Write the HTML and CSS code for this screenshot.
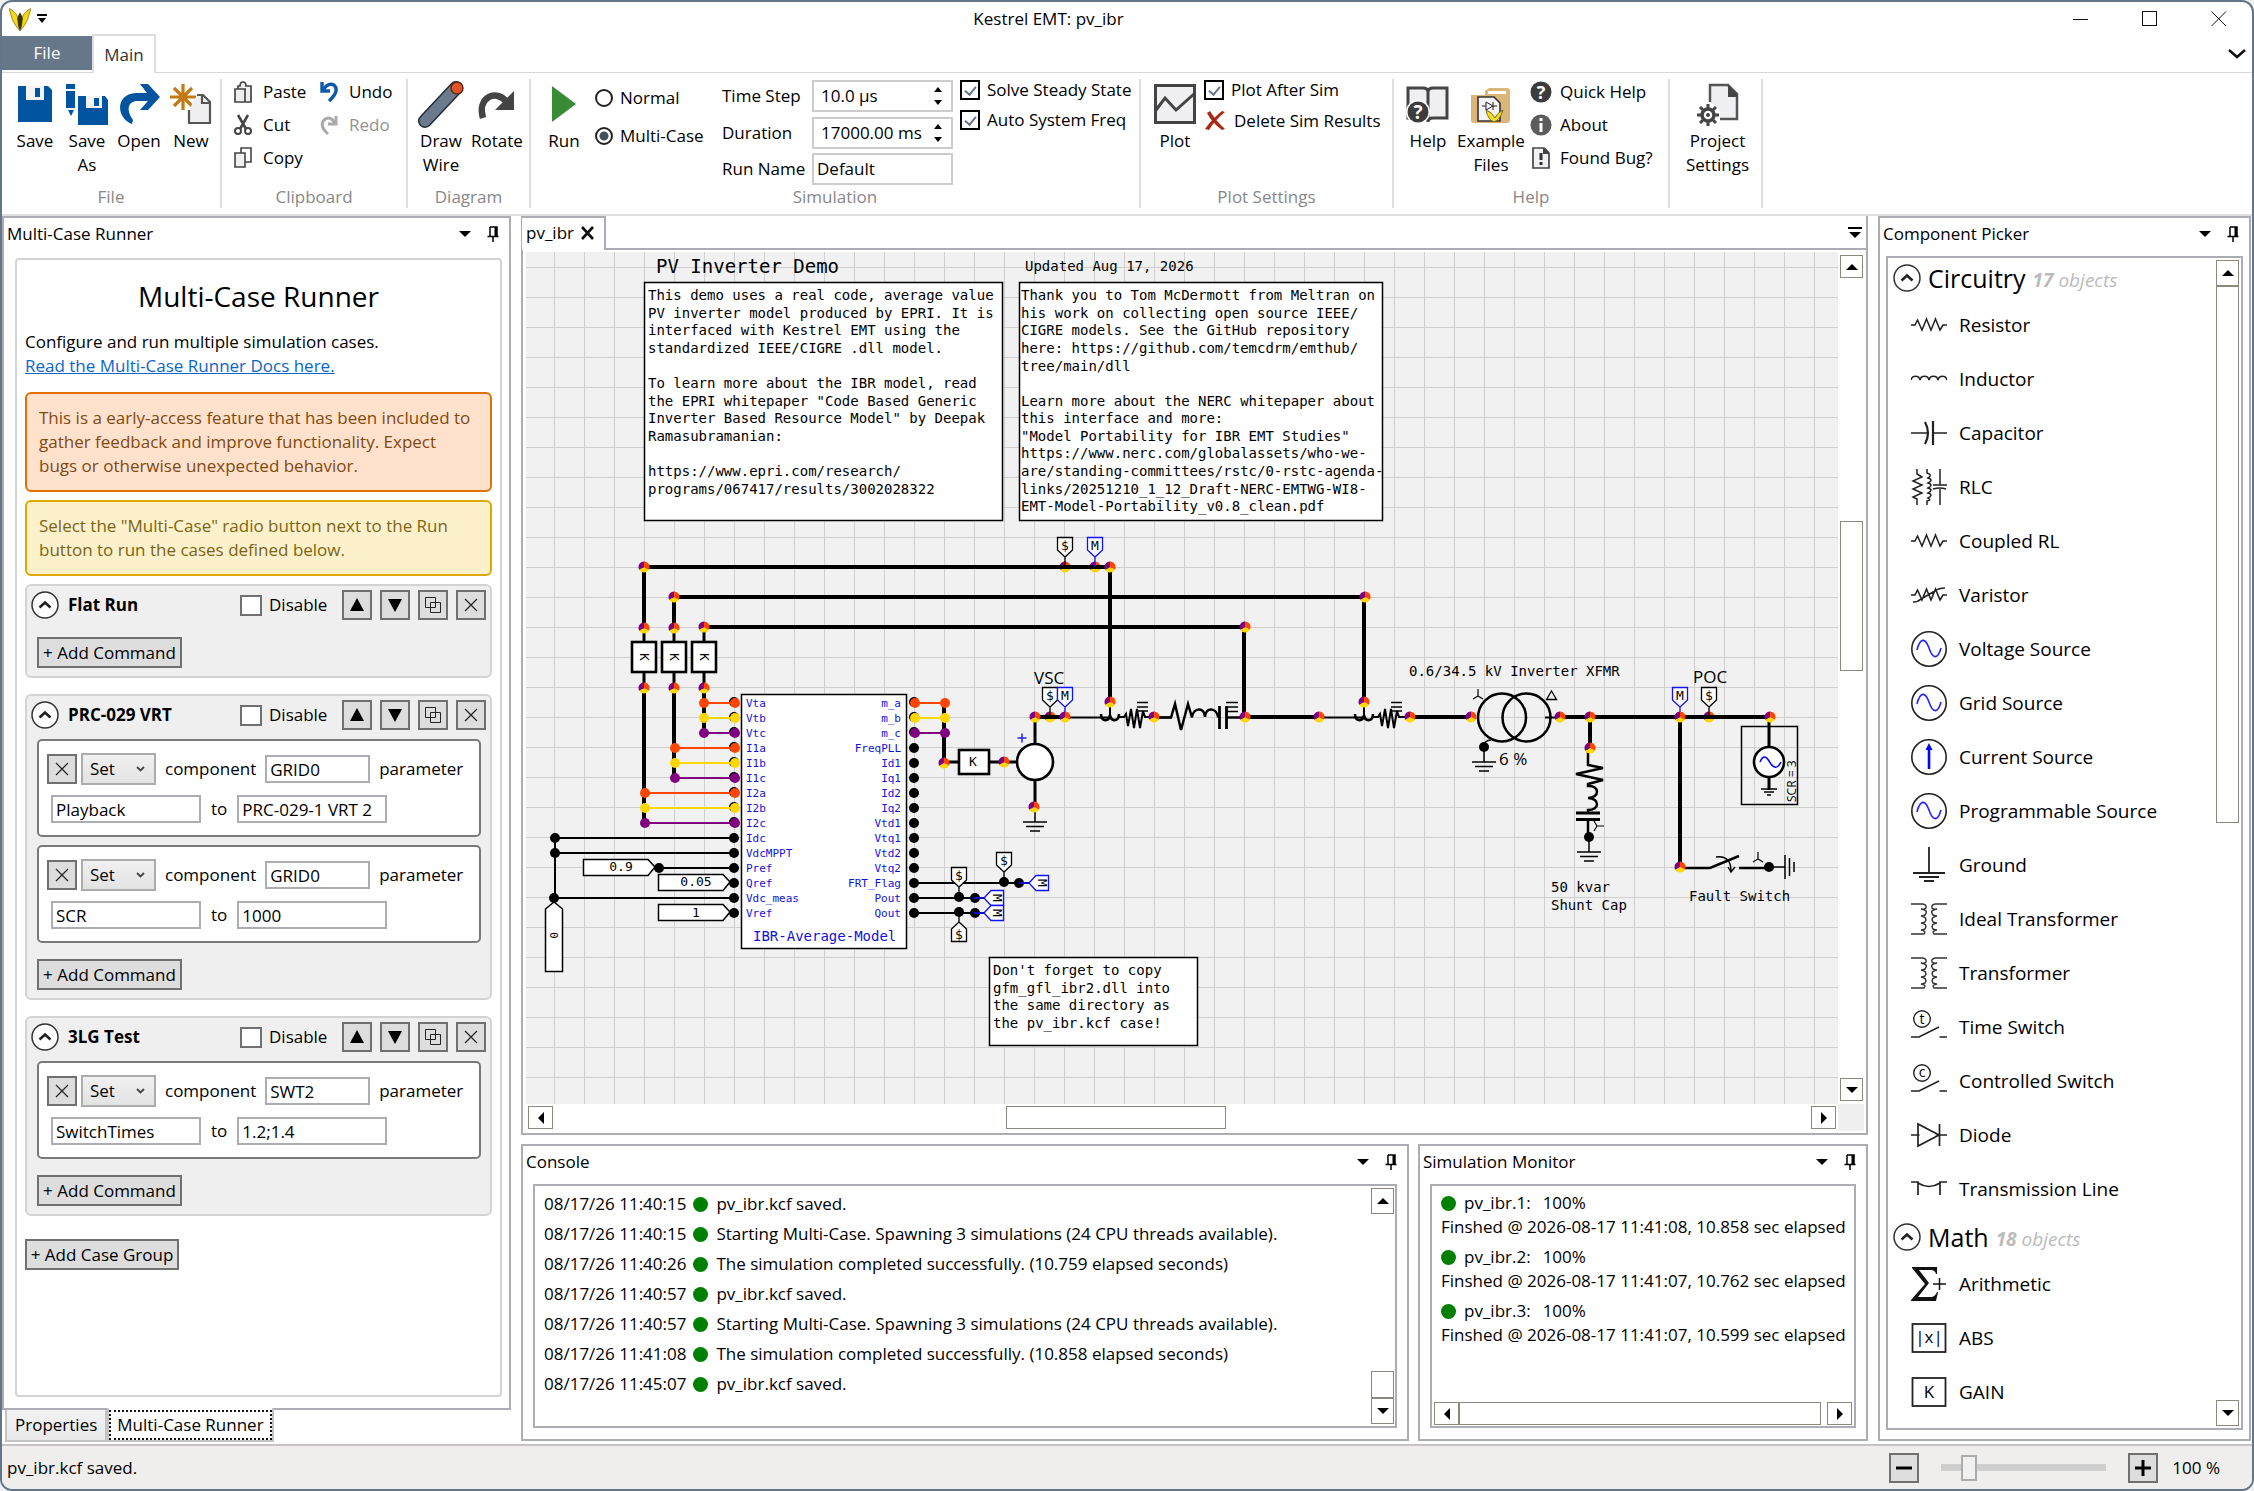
FILE: index.html
```html
<!DOCTYPE html>
<html lang="en">
<head>
<meta charset="utf-8">
<title>Kestrel EMT: pv_ibr</title>
<link rel="stylesheet" href="styles.css">
</head>
<body>
<svg class="defs" aria-hidden="true">
  <symbol id="i-up" viewBox="0 0 12 6"><path d="M0 6L6 0L12 6z"/></symbol>
  <symbol id="i-down" viewBox="0 0 12 6"><path d="M0 0L6 6L12 0z"/></symbol>
  <symbol id="i-left" viewBox="0 0 6 12"><path d="M6 0L0 6L6 12z"/></symbol>
  <symbol id="i-right" viewBox="0 0 6 12"><path d="M0 0L6 6L0 12z"/></symbol>
  <symbol id="i-pin" viewBox="0 0 12 16"><path d="M3 1h7v9M3 1v9M0.500 10.500h11M6 10.500v5.500" fill="none" stroke="#000" stroke-width="1.500"/><path d="M7.500 1h2.500v9h-2.500z"/></symbol>
  <symbol id="i-x" viewBox="0 0 14 14"><path d="M1 1L13 13M13 1L1 13" fill="none" stroke="#222" stroke-width="1.200"/></symbol>
  <symbol id="i-tri-up" viewBox="0 0 14 14"><path d="M0 13L7 0L14 13z"/></symbol>
  <symbol id="i-tri-down" viewBox="0 0 14 14"><path d="M0 1L7 14L14 1z"/></symbol>
  <symbol id="i-copy" viewBox="0 0 16 16"><path d="M.5.500h10v10h-10zM5.500 5.500h10v10h-10z" fill="none" stroke="#222"/></symbol>
  <symbol id="i-expand" viewBox="0 0 28 28"><circle cx="14" cy="14" r="13" fill="#fff" stroke="#333" stroke-width="1.500"/><path d="M8.500 16.500L14 11.500L19.500 16.500" fill="none" stroke="#222" stroke-width="2.600"/></symbol>
  <symbol id="bird" viewBox="0 0 24 26"><path d="M0 1C2 6 3 17 12 25C21 17 22 6 24 1C20 3 15 6 14 13L12 10L10 13C9 6 4 3 0 1z" fill="#f5d90a" stroke="#7a6a20" stroke-width=".8"/><path d="M12 5L14 9L15 12L14 20L12 26L10 20L9 12L10 9z" fill="#3b3413"/></symbol>
  <symbol id="c-res" viewBox="0 0 36 30"><path d="M0 15h4l2.500-5l4.500 10l4.500-11l4.500 11l4.500-11l4.500 11l3-5h4" fill="none" stroke="#222" stroke-width="1.500"/></symbol>
  <symbol id="c-ind" viewBox="0 0 36 30"><path d="M0 16c1-5 8-5 9 0c1-5 8-5 9 0c1-5 8-5 9 0c1-5 8-5 9 0" fill="none" stroke="#222" stroke-width="1.600"/></symbol>
  <symbol id="c-cap" viewBox="0 0 36 30"><path d="M0 15h17M22 15h14" fill="none" stroke="#222" stroke-width="1.500"/><path d="M14 4q6 11 0 22M22 3v24" fill="none" stroke="#222" stroke-width="2.200"/></symbol>
  <symbol id="c-rlc" viewBox="0 0 36 36"><path d="M6 0v5l5 3l-9 4l9 4l-9 4l9 4l-9 4l4 2v6M16 0v4q6 2 1 5q6 2 0 5q6 2 0 5q6 2 0 5q6 2 0 5q4 2-1 3v4M29 0v16M29 20v16M22 16h14M22 20q7-2 13 0" fill="none" stroke="#222" stroke-width="1.500"/></symbol>
  <symbol id="c-var" viewBox="0 0 36 30"><path d="M0 15h4l2.500-5l4.500 10l4.500-11l4.500 11l4.500-11l4.500 11l3-5h4M2 22q5 0 8-3l14-8q4-3 10-3" fill="none" stroke="#222" stroke-width="1.600"/></symbol>
  <symbol id="c-sine" viewBox="0 0 36 36"><circle cx="18" cy="18" r="17.200" fill="none" stroke="#222" stroke-width="1.600"/><path d="M6 19c3-12 8-13 12-2c4 12 9 11 12 0" fill="none" stroke="#22f" stroke-width="1.600"/></symbol>
  <symbol id="c-cur" viewBox="0 0 36 36"><circle cx="18" cy="18" r="17.200" fill="none" stroke="#222" stroke-width="1.600"/><path d="M18 30V9" stroke="#00f" stroke-width="2.600"/><path d="M14.500 11L18 4L21.500 11z" fill="#00f"/></symbol>
  <symbol id="c-gnd" viewBox="0 0 36 36"><path d="M18 0v26M2 26h32M8 30h20M13 34h10" fill="none" stroke="#222" stroke-width="1.800"/></symbol>
  <symbol id="c-xf" viewBox="0 0 36 36"><path d="M0 3h12q4 1 3 4q-2 2-5 1q8 1 4 6q-2 1-4 1q7 1 4 6q-2 1-4 1q7 1 4 6q-2 1-4 1q6 1 3 4l-2 0h-11M36 3h-12q-4 1-3 4q2 2 5 1q-8 1-4 6q2 1 4 1q-7 1-4 6q2 1 4 1q-7 1-4 6q2 1 4 1q-6 1-3 4h13" fill="none" stroke="#333" stroke-width="1.400"/></symbol>
  <symbol id="c-sw" viewBox="0 0 36 36"><circle cx="11" cy="10" r="8.300" fill="none" stroke="#222" stroke-width="1.400"/><path d="M0 28h8L28 18M28.500 28h7.500" fill="none" stroke="#222" stroke-width="1.500"/></symbol>
  <symbol id="c-diode" viewBox="0 0 36 36"><path d="M0 18h36M7 7v22L28 18zM28.500 7v22" fill="none" stroke="#222" stroke-width="1.700"/><path d="M8.500 10v16L26 18z" fill="#fff"/></symbol>
  <symbol id="c-line" viewBox="0 0 36 36"><path d="M0 11h7v13M36 11h-7v13M7 12q11 7 22 0" fill="none" stroke="#222" stroke-width="1.700"/></symbol>
  <symbol id="c-sum" viewBox="0 0 36 36"><path d="M1 1h25v7h-1q-1-4-5-4h-12l10 13l-11 14h13q4 0 6-5h1l-2 9h-25v-1l14-16l-13-16z" fill="#111"/><path d="M22 18h13M28.500 12v12" stroke="#111" stroke-width="1.500"/></symbol>
  <symbol id="c-box" viewBox="0 0 36 36"><rect x="1.500" y="4" width="33" height="28" fill="none" stroke="#222" stroke-width="1.800"/></symbol>
  <g id="node"><path d="M0 0V-5.500A5.500 5.500 0 0 1 4.800 2.700z" fill="#ff4500"/><path d="M0 0L4.800 2.700A5.500 5.500 0 0 1-4.800 2.700z" fill="#ffd700"/><path d="M0 0L-4.800 2.700A5.500 5.500 0 0 1 0-5.500z" fill="#800080"/></g>
  <g id="dot"><circle r="5"/></g>
  <g id="flag"><path d="M0 0V-10M0-10L-7.500-17V-29.500H7.500V-17z" fill="#fff" stroke="currentColor" stroke-width="1.300"/></g>
  <g id="gnd" fill="none" stroke="#000" stroke-width="1.500"><path d="M0-15V0M-12 0H12M-9 4.500H9M-5 9H5"/></g>
  <g id="wye" fill="none" stroke="#000" stroke-width="1.200"><path d="M0-6V1L-5 4M0 1L5 4"/></g>
  <g id="ct" fill="none" stroke="#000"><path d="M0-15V1" stroke-width="2"/><path d="M-9-3c0 8 8 8 9 1c1 7 9 7 9-1" stroke-width="2.600"/><path d="M9 0H14l2-3l2 12l3-17l3 19l3-19l3 19l3-17l2 6H44" stroke-width="2"/><path d="M27-14.500h11M27-10h11M27-6h11" stroke-width="1.300"/></g>
</svg>

<div class="window">
  <header class="titlebar">
    <div class="quick">
      <svg width="22" height="25"><use href="#bird"/></svg>
      <button class="plain" aria-label="Customize toolbar"><svg width="10" height="10"><path d="M0 0h10v2H0zM1 4h8L5 9z"/></svg></button>
    </div>
    <div class="title">Kestrel EMT: pv_ibr</div>
    <div class="winbtns">
      <button class="plain" aria-label="Minimize"><svg width="16" height="16"><path d="M0 8.500h15" stroke="#111"/></svg></button>
      <button class="plain" aria-label="Maximize"><svg width="16" height="16"><rect x=".5" y=".5" width="14" height="14" fill="none" stroke="#111"/></svg></button>
      <button class="plain" aria-label="Close"><svg width="16" height="16"><path d="M.5.500L15 15M15 .500L.5 15" stroke="#111"/></svg></button>
    </div>
  </header>
  <nav class="tabs">
    <button class="tab-file">File</button>
    <button class="tab-main">Main</button>
    <button class="plain tabs-chevron" aria-label="Collapse ribbon"><svg width="18" height="10"><path d="M1 1l8 7l8-7" fill="none" stroke="#111" stroke-width="2.500"/></svg></button>
  </nav>

  <div class="ribbon">
    <section class="group g-file">
      <div class="tools">
        <button class="big"><svg width="40" height="40"><path d="M3 2H33L37 6V38H3z" fill="#0054a0"/><path d="M11 2h18v14H11z" fill="#f3f3f6"/><path d="M20 4h5v9h-5z" fill="#0054a0"/></svg><span>Save</span></button>
        <button class="big"><svg width="44" height="42"><path d="M1 0h9v5H1zM1 7h9v17H1zM3 26h6l-3 6z" fill="#0054a0"/><path d="M13 12H40L43 16V41H13z" fill="#0054a0"/><path d="M21 12h16v12H21z" fill="#f3f3f6"/><path d="M29 14h5v8h-5z" fill="#0054a0"/></svg><span>Save As</span></button>
        <button class="big"><svg width="42" height="40"><path d="M22 0h8L42 13L30 26H22L30 17H20C11 17 7 24 15 36L14 40C-2 34-3 10 18 9H29z" fill="#0054a0"/></svg><span>Open</span></button>
        <button class="big"><svg width="42" height="42"><path d="M13 0v26M0 13h26M4 4l18 18M22 4L4 22" stroke="#c47a12" stroke-width="3.200"/><path d="M19 26v13h21V18l-7-7h-6" fill="#f0f0f3" stroke="#555" stroke-width="2.200"/><path d="M32 12v7h8" fill="none" stroke="#555" stroke-width="2.200"/></svg><span>New</span></button>
      </div>
      <div class="caption">File</div>
    </section>
    <section class="group g-clip">
      <div class="tools">
        <div class="stack">
          <button class="small"><svg width="18" height="22"><path d="M1 8h10v13H1zM4 8V5h2q0-4 3-4t3 4h5v16h-6M6 8h6" fill="#eee" stroke="#444" stroke-width="1.700"/></svg>Paste</button>
          <button class="small"><svg width="18" height="22"><path d="M4 1L12 15M14 1L6 15" stroke="#444" stroke-width="2.600"/><circle cx="4" cy="17" r="3" fill="none" stroke="#444" stroke-width="2"/><circle cx="14" cy="17" r="3" fill="none" stroke="#444" stroke-width="2"/></svg>Cut</button>
          <button class="small"><svg width="18" height="22"><path d="M7 1h10v14H7z" fill="#fff" stroke="#444" stroke-width="1.600"/><path d="M1 6h10v14H1z" fill="#f0f0f0" stroke="#444" stroke-width="1.600"/></svg>Copy</button>
        </div>
        <div class="stack">
          <button class="small"><svg width="18" height="22"><path d="M2 1v9h8" fill="none" stroke="#0f5aa8" stroke-width="3.400"/><path d="M3 9Q8 1 14 4Q20 10 9 20" fill="none" stroke="#0f5aa8" stroke-width="3.400"/></svg>Undo</button>
          <button class="small off"><svg width="18" height="22"><path d="M16 2v8h-8M15 9Q10 1 4 6Q-1 12 8 20" fill="none" stroke="#aaa" stroke-width="3"/></svg>Redo</button>
        </div>
      </div>
      <div class="caption">Clipboard</div>
    </section>
    <section class="group g-diag">
      <div class="tools">
        <button class="big up"><svg width="46" height="48"><path d="M7 37L38 4" stroke="#222c38" stroke-width="14" stroke-linecap="round"/><path d="M7 37L38 4" stroke="#6b7b8d" stroke-width="11" stroke-linecap="round"/><circle cx="39" cy="4" r="6" fill="#e0542a" stroke="#5b2a1a" stroke-width="1.500"/></svg><span>Draw Wire</span></button>
        <button class="big"><svg width="38" height="40"><path d="M5 34C-1 14 17 5 28 17" fill="none" stroke="#444" stroke-width="6.500"/><path d="M36 7V26H17z" fill="#444"/></svg><span>Rotate</span></button>
      </div>
      <div class="caption">Diagram</div>
    </section>
    <section class="group g-sim">
      <div class="tools">
        <button class="big"><svg width="26" height="40"><path d="M1 2L25 20L1 38z" fill="#388a34"/></svg><span>Run</span></button>
        <div class="radios">
          <label><input type="radio" name="mode">Normal</label>
          <label><input type="radio" name="mode" checked>Multi-Case</label>
        </div>
        <div class="fields">
          <label for="ts">Time Step</label><div class="spin"><input id="ts" type="text" value="10.0 µs"><div class="arrows"><button class="plain" aria-label="Increase"><svg width="8" height="5"><path d="M0 5L4 0L8 5z"/></svg></button><button class="plain" aria-label="Decrease"><svg width="8" height="5"><path d="M0 0L4 5L8 0z"/></svg></button></div></div>
          <label for="du">Duration</label><div class="spin"><input id="du" type="text" value="17000.00 ms"><div class="arrows"><button class="plain" aria-label="Increase"><svg width="8" height="5"><path d="M0 5L4 0L8 5z"/></svg></button><button class="plain" aria-label="Decrease"><svg width="8" height="5"><path d="M0 0L4 5L8 0z"/></svg></button></div></div>
          <label for="rn">Run Name</label><div class="spin"><input id="rn" class="rn" type="text" value="Default"></div>
        </div>
        <div class="checks">
          <label><input type="checkbox" checked>Solve Steady State</label>
          <label><input type="checkbox" checked>Auto System Freq</label>
        </div>
      </div>
      <div class="caption">Simulation</div>
    </section>
    <section class="group g-plot">
      <div class="tools">
        <button class="big"><svg width="42" height="40"><rect x="1.500" y="1.500" width="39" height="37" fill="#f0f0f3" stroke="#444" stroke-width="3"/><path d="M2 26L11 14L22 26L40 10" fill="none" stroke="#444" stroke-width="3"/></svg><span>Plot</span></button>
        <div class="checks">
          <label><input type="checkbox" checked>Plot After Sim</label>
          <button class="small del"><svg width="22" height="20"><path d="M1 18Q8 8 18 0L21 1Q11 9 5 19zM3 2L6 0Q12 10 21 18L18 19Q8 12 3 2z" fill="#a82a14"/></svg>Delete Sim Results</button>
        </div>
      </div>
      <div class="caption">Plot Settings</div>
    </section>
    <section class="group g-help">
      <div class="tools">
        <button class="big"><svg width="44" height="40"><path d="M2 4h15q5 0 5 4q0-4 5-4h14v30h-14q-5 0-5 4q0-4-4-4H2z" fill="#f0f0f3" stroke="#444" stroke-width="3"/><path d="M22 8v28" stroke="#444" stroke-width="3"/><circle cx="12" cy="28" r="12" fill="#fff"/><circle cx="12" cy="28" r="10.500" fill="#3c3c3c"/><text x="12" y="35" text-anchor="middle" font-size="19" font-weight="700" fill="#fff">?</text></svg><span>Help</span></button>
        <button class="big"><svg width="42" height="40"><path d="M1 11h14V7l4-3h18q3 0 3 3v29q0 3-3 3H4q-3 0-3-3z" fill="#dcb679"/><path d="M18 7h18v3H18z" fill="#fff"/><path d="M8 13h16l6 6v18H8z" fill="#f4f4f4" stroke="#333" stroke-width="1.600"/><path d="M12 22h4m7 0h4M16 18v8l7-4zM23 18v8" fill="none" stroke="#222"/><path d="M16 26q2 10 8 12q6-2 9-12q-6 3-8 8q-3-6-9-8z" fill="#f7e017" stroke="#554a10" stroke-width=".8"/></svg><span>Example Files</span></button>
        <div class="stack">
          <button class="small"><svg width="22" height="22"><circle cx="11" cy="11" r="10.500" fill="#3c3c3c"/><text x="11" y="18" text-anchor="middle" font-size="18" font-weight="700" fill="#fff">?</text></svg>Quick Help</button>
          <button class="small"><svg width="22" height="22"><circle cx="11" cy="11" r="10.500" fill="#5c5c5c"/><path d="M9.500 9h3v9h-3zM9.500 4h3v3h-3z" fill="#fff"/></svg>About</button>
          <button class="small"><svg width="22" height="22"><path d="M3 1h11l5 5v15H3z" fill="#f0f0f3" stroke="#444" stroke-width="1.700"/><path d="M13 1h2l4 4v2h-6z" fill="#444"/><path d="M9.500 6h3v7h-3zM9.500 15h3v3h-3z" fill="#333"/></svg>Found Bug?</button>
        </div>
      </div>
      <div class="caption">Help</div>
    </section>
    <section class="group g-proj">
      <div class="tools">
        <button class="big"><svg width="42" height="42"><path d="M13 18V1h18l9 9v25H23" fill="#f0f0f3" stroke="#555" stroke-width="2.500"/><path d="M31 1l9 9v3h-9z" fill="#444"/><circle cx="11" cy="31" r="12" fill="#fff"/><circle cx="11" cy="31" r="6" fill="none" stroke="#444" stroke-width="3.500"/><path d="M11 20v5M11 37v5M0 31h5M17 31h5M3 23l4 4M15 35l4 4M19 23l-4 4M7 35l-4 4" stroke="#444" stroke-width="3"/><circle cx="11" cy="31" r="2" fill="#444"/></svg><span>Project Settings</span></button>
      </div>
    </section>
  </div>

  <main class="work">
    <div class="left">
      <section class="panel runner">
        <header class="phead"><h2>Multi-Case Runner</h2><button class="plain" aria-label="Menu"><svg width="12" height="6"><use href="#i-down"/></svg></button><button class="plain" aria-label="Pin"><svg width="12" height="16"><use href="#i-pin"/></svg></button></header>
        <div class="rcard">
          <h1>Multi-Case Runner</h1>
          <p>Configure and run multiple simulation cases.<br><a href="#docs">Read the Multi-Case Runner Docs here.</a></p>
          <div class="note warn">This is a early-access feature that has been included to gather feedback and improve functionality. Expect bugs or otherwise unexpected behavior.</div>
          <div class="note info">Select the "Multi-Case" radio button next to the Run button to run the cases defined below.</div>

          <section class="case">
            <header><button class="plain" aria-label="Collapse"><svg width="28" height="28"><use href="#i-expand"/></svg></button><h3>Flat Run</h3><label><input type="checkbox">Disable</label>
              <button class="sq" aria-label="Move up"><svg width="14" height="14"><use href="#i-tri-up"/></svg></button><button class="sq" aria-label="Move down"><svg width="14" height="14"><use href="#i-tri-down"/></svg></button><button class="sq" aria-label="Duplicate"><svg width="16" height="16"><use href="#i-copy"/></svg></button><button class="sq" aria-label="Remove"><svg width="14" height="14"><use href="#i-x"/></svg></button></header>
            <button class="add">+ Add Command</button>
          </section>

          <section class="case">
            <header><button class="plain" aria-label="Collapse"><svg width="28" height="28"><use href="#i-expand"/></svg></button><h3>PRC-029 VRT</h3><label><input type="checkbox">Disable</label>
              <button class="sq" aria-label="Move up"><svg width="14" height="14"><use href="#i-tri-up"/></svg></button><button class="sq" aria-label="Move down"><svg width="14" height="14"><use href="#i-tri-down"/></svg></button><button class="sq" aria-label="Duplicate"><svg width="16" height="16"><use href="#i-copy"/></svg></button><button class="sq" aria-label="Remove"><svg width="14" height="14"><use href="#i-x"/></svg></button></header>
            <div class="cmd">
              <div class="r1"><button class="sq" aria-label="Remove command"><svg width="14" height="14"><use href="#i-x"/></svg></button><div class="sel"><select aria-label="Action"><option>Set</option></select><svg width="9" height="6"><path d="M1 1l3.500 3.500L8 1" fill="none" stroke="#444" stroke-width="1.800"/></svg></div><label for="c1">component</label><input id="c1" type="text" value="GRID0"><label for="p1">parameter</label></div>
              <div class="r2"><input id="p1" type="text" value="Playback"><label for="v1">to</label><input id="v1" type="text" value="PRC-029-1 VRT 2"></div>
            </div>
            <div class="cmd">
              <div class="r1"><button class="sq" aria-label="Remove command"><svg width="14" height="14"><use href="#i-x"/></svg></button><div class="sel"><select aria-label="Action"><option>Set</option></select><svg width="9" height="6"><path d="M1 1l3.500 3.500L8 1" fill="none" stroke="#444" stroke-width="1.800"/></svg></div><label for="c2">component</label><input id="c2" type="text" value="GRID0"><label for="p2">parameter</label></div>
              <div class="r2"><input id="p2" type="text" value="SCR"><label for="v2">to</label><input id="v2" type="text" value="1000"></div>
            </div>
            <button class="add">+ Add Command</button>
          </section>

          <section class="case">
            <header><button class="plain" aria-label="Collapse"><svg width="28" height="28"><use href="#i-expand"/></svg></button><h3>3LG Test</h3><label><input type="checkbox">Disable</label>
              <button class="sq" aria-label="Move up"><svg width="14" height="14"><use href="#i-tri-up"/></svg></button><button class="sq" aria-label="Move down"><svg width="14" height="14"><use href="#i-tri-down"/></svg></button><button class="sq" aria-label="Duplicate"><svg width="16" height="16"><use href="#i-copy"/></svg></button><button class="sq" aria-label="Remove"><svg width="14" height="14"><use href="#i-x"/></svg></button></header>
            <div class="cmd">
              <div class="r1"><button class="sq" aria-label="Remove command"><svg width="14" height="14"><use href="#i-x"/></svg></button><div class="sel"><select aria-label="Action"><option>Set</option></select><svg width="9" height="6"><path d="M1 1l3.500 3.500L8 1" fill="none" stroke="#444" stroke-width="1.800"/></svg></div><label for="c3">component</label><input id="c3" type="text" value="SWT2"><label for="p3">parameter</label></div>
              <div class="r2"><input id="p3" type="text" value="SwitchTimes"><label for="v3">to</label><input id="v3" type="text" value="1.2;1.4"></div>
            </div>
            <button class="add">+ Add Command</button>
          </section>
          <button class="add addgroup">+ Add Case Group</button>
        </div>
      </section>
      <div class="btabs"><button class="bt">Properties</button><button class="bt on">Multi-Case Runner</button></div>
    </div>

    <div class="center">
      <section class="doc">
        <div class="doctabs"><button class="doctab">pv_ibr <svg width="14" height="14"><path d="M1 1L12 13M12 1L1 13" stroke="#111" stroke-width="2.600"/></svg></button><button class="plain" aria-label="Documents"><svg width="14" height="11"><path d="M0 0h14v2H0zM1 5h12L7 11z"/></svg></button></div>
        <div class="docbody">
          <svg class="canvas" role="img" aria-label="Circuit diagram">
            <defs><pattern id="grid" width="30" height="30" patternUnits="userSpaceOnUse" x="28" y="15"><path d="M.5 0V30M0 .500H30" stroke="#cfcfcf" fill="none"/></pattern></defs>
            <rect width="100%" height="100%" fill="url(#grid)"/>
            <g transform="translate(-526 -252)">
              <text class="t19" x="656" y="273">PV Inverter Demo</text>
              <text x="1025" y="271">Updated Aug 17, 2026</text>
              <g fill="#fff" stroke="#000" stroke-width="1.500"><rect x="644.500" y="282.500" width="358" height="238"/><rect x="1019.500" y="282.500" width="363" height="238"/><rect x="989.500" y="957.500" width="208" height="88"/></g>
              <text><tspan x="648" y="300">This demo uses a real code, average value</tspan><tspan x="648" y="318">PV inverter model produced by EPRI. It is</tspan><tspan x="648" y="335">interfaced with Kestrel EMT using the</tspan><tspan x="648" y="353">standardized IEEE/CIGRE .dll model.</tspan><tspan x="648" y="388">To learn more about the IBR model, read</tspan><tspan x="648" y="406">the EPRI whitepaper "Code Based Generic</tspan><tspan x="648" y="423">Inverter Based Resource Model" by Deepak</tspan><tspan x="648" y="441">Ramasubramanian:</tspan><tspan x="648" y="476">https://www.epri.com/research/</tspan><tspan x="648" y="494">programs/067417/results/3002028322</tspan></text>
              <text><tspan x="1021" y="300">Thank you to Tom McDermott from Meltran on</tspan><tspan x="1021" y="318">his work on collecting open source IEEE/</tspan><tspan x="1021" y="335">CIGRE models. See the GitHub repository</tspan><tspan x="1021" y="353">here: https://github.com/temcdrm/emthub/</tspan><tspan x="1021" y="371">tree/main/dll</tspan><tspan x="1021" y="406">Learn more about the NERC whitepaper about</tspan><tspan x="1021" y="423">this interface and more:</tspan><tspan x="1021" y="441">"Model Portability for IBR EMT Studies"</tspan><tspan x="1021" y="458">https://www.nerc.com/globalassets/who-we-</tspan><tspan x="1021" y="476">are/standing-committees/rstc/0-rstc-agenda-</tspan><tspan x="1021" y="494">links/20251210_1_12_Draft-NERC-EMTWG-WI8-</tspan><tspan x="1021" y="511">EMT-Model-Portability_v0.8_clean.pdf</tspan></text>
              <text><tspan x="993" y="975">Don't forget to copy</tspan><tspan x="993" y="993">gfm_gfl_ibr2.dll into</tspan><tspan x="993" y="1010">the same directory as</tspan><tspan x="993" y="1028">the pv_ibr.kcf case!</tspan></text>

              <use href="#node" x="1065" y="567"/><use href="#node" x="1095" y="567"/><use href="#node" x="1050" y="717"/><use href="#node" x="1709" y="717"/>
              <g fill="none" stroke="#000" stroke-width="4">
                <path d="M644 628V567H1110V702M674 627V597H1364V702M704 627H1244V717"/>
                <path d="M644 687V823M674 687V778M704 687V733M944 703V763"/>
                <path d="M1035 717H1065M1244 717H1319M1410 717H1471M1560 717H1769M1590 717V748M1680 717V867"/>
              </g>
              <g fill="none" stroke="#000" stroke-width="3"><path d="M644 628V687M674 627V687M704 627V687M944 762H1016M1035 717V807M1769 717V790"/></g>
              <g fill="none" stroke="#000" stroke-width="2"><path d="M1065 717.500H1109M1319 717.500H1364M1545 717.500H1560M1154 717.500H1171"/><path d="M555 904V838H734M555 853H734M659 868H734M555 898H734M914 883H1029M914 898H984M914 913H984"/></g>
              <g fill="#fff" stroke="#000" stroke-width="2.600"><rect x="632" y="642" width="24" height="30"/><rect x="662" y="642" width="24" height="30"/><rect x="692" y="642" width="24" height="30"/><rect x="959" y="750" width="30" height="24"/><circle cx="1035" cy="762" r="18"/></g>
              <text class="t13" transform="translate(640 653) rotate(90)">K</text><text class="t13" transform="translate(670 653) rotate(90)">K</text><text class="t13" transform="translate(700 653) rotate(90)">K</text><text class="t13" x="969" y="766">K</text>
              <g class="thin"><rect x="741.500" y="694.500" width="165" height="254"/></g>
              <g><use href="#dot" x="734" y="702"/><use href="#dot" x="734" y="717"/><use href="#dot" x="734" y="732"/><use href="#dot" x="734" y="747"/><use href="#dot" x="734" y="762"/><use href="#dot" x="734" y="777"/><use href="#dot" x="734" y="792"/><use href="#dot" x="734" y="807"/><use href="#dot" x="734" y="822"/><use href="#dot" x="734" y="838"/><use href="#dot" x="734" y="853"/><use href="#dot" x="734" y="868"/><use href="#dot" x="734" y="883"/><use href="#dot" x="734" y="898"/><use href="#dot" x="734" y="913"/>
              <use href="#dot" x="914" y="702"/><use href="#dot" x="914" y="717"/><use href="#dot" x="914" y="732"/><use href="#dot" x="914" y="748"/><use href="#dot" x="914" y="763"/><use href="#dot" x="914" y="778"/><use href="#dot" x="914" y="793"/><use href="#dot" x="914" y="808"/><use href="#dot" x="914" y="823"/><use href="#dot" x="914" y="838"/><use href="#dot" x="914" y="853"/><use href="#dot" x="914" y="868"/><use href="#dot" x="914" y="883"/><use href="#dot" x="914" y="898"/><use href="#dot" x="914" y="913"/>
              <use href="#dot" x="555" y="838"/><use href="#dot" x="555" y="853"/><use href="#dot" x="554" y="898"/><use href="#dot" x="659" y="868"/><use href="#dot" x="1004" y="882"/><use href="#dot" x="1019" y="883"/><use href="#dot" x="959" y="897"/><use href="#dot" x="975" y="898"/><use href="#dot" x="959" y="912"/><use href="#dot" x="975" y="913"/><use href="#dot" x="1484" y="747"/><use href="#dot" x="1589" y="837"/><use href="#dot" x="1769" y="867"/></g>
              <g stroke="#ff4500" fill="#ff4500" stroke-width="2"><path d="M704 703H734M674 748H734M644 793H734M914 703H944"/><g stroke="none"><use href="#dot" x="704" y="703"/><use href="#dot" x="735" y="703"/><use href="#dot" x="675" y="748"/><use href="#dot" x="735" y="748"/><use href="#dot" x="645" y="793"/><use href="#dot" x="735" y="793"/><use href="#dot" x="915" y="703"/><use href="#dot" x="945" y="703"/></g></g>
              <g stroke="#ffd700" fill="#ffd700" stroke-width="2"><path d="M704 718H734M674 763H734M644 808H734M914 718H944"/><g stroke="none"><use href="#dot" x="704" y="718"/><use href="#dot" x="735" y="718"/><use href="#dot" x="675" y="763"/><use href="#dot" x="735" y="763"/><use href="#dot" x="645" y="808"/><use href="#dot" x="735" y="808"/><use href="#dot" x="915" y="718"/><use href="#dot" x="945" y="718"/></g></g>
              <g stroke="#800080" fill="#800080" stroke-width="2"><path d="M704 733H734M674 778H734M644 823H734M914 733H944"/><g stroke="none"><use href="#dot" x="704" y="733"/><use href="#dot" x="735" y="733"/><use href="#dot" x="675" y="778"/><use href="#dot" x="735" y="778"/><use href="#dot" x="645" y="823"/><use href="#dot" x="735" y="823"/><use href="#dot" x="915" y="733"/><use href="#dot" x="945" y="733"/></g></g>
              <text class="pin"><tspan x="746" y="707">Vta</tspan><tspan x="746" y="722">Vtb</tspan><tspan x="746" y="737">Vtc</tspan><tspan x="746" y="752">I1a</tspan><tspan x="746" y="767">I1b</tspan><tspan x="746" y="782">I1c</tspan><tspan x="746" y="797">I2a</tspan><tspan x="746" y="812">I2b</tspan><tspan x="746" y="827">I2c</tspan><tspan x="746" y="842">Idc</tspan><tspan x="746" y="857">VdcMPPT</tspan><tspan x="746" y="872">Pref</tspan><tspan x="746" y="887">Qref</tspan><tspan x="746" y="902">Vdc_meas</tspan><tspan x="746" y="917">Vref</tspan></text>
              <text class="pin end"><tspan x="901" y="707">m_a</tspan><tspan x="901" y="722">m_b</tspan><tspan x="901" y="737">m_c</tspan><tspan x="901" y="752">FreqPLL</tspan><tspan x="901" y="767">Id1</tspan><tspan x="901" y="782">Iq1</tspan><tspan x="901" y="797">Id2</tspan><tspan x="901" y="812">Iq2</tspan><tspan x="901" y="827">Vtd1</tspan><tspan x="901" y="842">Vtq1</tspan><tspan x="901" y="857">Vtd2</tspan><tspan x="901" y="872">Vtq2</tspan><tspan x="901" y="887">FRT_Flag</tspan><tspan x="901" y="902">Pout</tspan><tspan x="901" y="917">Qout</tspan></text>
              <text class="blue" x="753" y="941">IBR-Average-Model</text>

              <g class="thin"><path d="M583.500 859.500H648L655 867L648 875.500H583.500zM658.500 874.500H723L730 882L723 890.500H658.500zM658.500 904.500H723L730 912L723 920.500H658.500zM545.500 971.500V909L554 902L562.500 909V971.500z"/></g>
              <text class="t13 mid" x="621" y="871">0.9</text><text class="t13 mid" x="696" y="886">0.05</text><text class="t13 mid" x="696" y="917">1</text><text class="t11" transform="translate(550 932) rotate(90)">0</text>

              <use href="#flag" x="1065" y="567"/><use href="#flag" x="1050" y="717"/><use href="#flag" x="1709" y="717"/><use href="#flag" x="1004" y="882"/><use href="#flag" x="959" y="897"/><g transform="translate(959 912) scale(1 -1)"><use href="#flag"/></g>
              <g class="bflag"><use href="#flag" x="1095" y="567"/><use href="#flag" x="1065" y="717"/><use href="#flag" x="1680" y="717"/><use href="#flag" transform="translate(1019 883) rotate(90)"/><use href="#flag" transform="translate(974 898) rotate(90)"/><use href="#flag" transform="translate(974 913) rotate(90)"/></g>
              <g class="t13 mid"><text x="1065" y="550">$</text><text x="1095" y="550">M</text><text x="1050" y="700">$</text><text x="1065" y="700">M</text><text x="1680" y="700">M</text><text x="1709" y="700">$</text><text x="1004" y="865">$</text><text x="959" y="880">$</text><text x="959" y="939">$</text><text transform="translate(1038 883) rotate(90)">M</text><text transform="translate(993 898) rotate(90)">M</text><text transform="translate(993 913) rotate(90)">M</text></g>

              <path d="M1017.500 738H1026.500M1022 733.500V742.500" stroke="#22f" stroke-width="1.500"/>
              <text class="seg" x="1034" y="684">VSC</text><text class="seg" x="1693" y="683">POC</text><text class="seg" x="1499" y="765">6 %</text>
              <use href="#gnd" x="1035" y="822"/><use href="#ct" x="1110" y="717"/><use href="#ct" x="1364" y="717"/>
              <g fill="none" stroke="#000" stroke-width="2.500"><path d="M1154 717.500H1171L1175 704L1181 730L1188 704L1192 717.500C1193 707 1205 707 1205 717C1205 707 1217 707 1218 717.500M1227 717.500H1244"/><path d="M1219.500 706V729M1226.500 706V729" stroke-width="2.800"/><path d="M1226 702.500H1238M1226 707H1238M1226 711.500H1238" stroke-width="1.300"/>
              <circle cx="1502" cy="717.500" r="24"/><circle cx="1526.500" cy="717.500" r="24"/></g>
              <path d="M1491 740Q1484 740 1484 747M1546.500 699.500L1551.500 691L1556.500 699.500z" fill="none" stroke="#000" stroke-width="1.300"/>
              <use href="#wye" x="1478" y="695"/><use href="#gnd" x="1484" y="762"/>
              <text x="1409" y="676">0.6/34.5 kV Inverter XFMR</text><text x="1551" y="892">50 kvar</text><text x="1551" y="910">Shunt Cap</text><text x="1689" y="901">Fault Switch</text>
              <g fill="none" stroke="#000" stroke-width="2.500"><path d="M1588 748V765L1603 768L1576 774L1603 780L1588 784V786C1600 785 1600 798 1588 798C1600 798 1600 810 1588 810V812M1588 820V837"/><path d="M1576 813H1600M1576 819.500H1600" stroke-width="2.800"/><path d="M1685 868H1710L1739 856M1739 868H1769"/></g>
              <use href="#wye" transform="translate(1598 826) rotate(90)"/><use href="#gnd" x="1589" y="852"/>
              <path d="M1716 857Q1731 855 1731 871M1728 867L1731 872L1735 867" fill="none" stroke="#000" stroke-width="1.400"/>
              <use href="#wye" x="1758" y="858"/><use href="#gnd" transform="translate(1785 867) rotate(-90)"/>
              <rect x="1741.500" y="726.500" width="56" height="78" fill="none" stroke="#000" stroke-width="1.500"/>
              <circle cx="1769" cy="762" r="15" fill="#fff" stroke="#000" stroke-width="2.600"/><path d="M1760 762C1763 755 1766 756 1769 761C1773 768 1777 770 1781 762" fill="none" stroke="#00f" stroke-width="1.600"/>
              <path d="M1761 789H1777M1764 792H1774M1767 795H1771" stroke="#000" stroke-width="1.500"/>
              <text class="scr" transform="translate(1796 802) rotate(-90)">SCR = 3</text>
              <use href="#node" x="644" y="567"/><use href="#node" x="1110" y="567"/><use href="#node" x="674" y="597"/><use href="#node" x="1365" y="597"/><use href="#node" x="704" y="627"/><use href="#node" x="1245" y="627"/><use href="#node" x="644" y="628"/><use href="#node" x="674" y="628"/><use href="#node" x="644" y="688"/><use href="#node" x="674" y="688"/><use href="#node" x="704" y="688"/><use href="#node" x="944" y="763"/><use href="#node" x="1004" y="762"/><use href="#node" x="1035" y="717"/><use href="#node" x="1065" y="717"/><use href="#node" x="1034" y="807"/><use href="#node" x="1110" y="702"/><use href="#node" x="1154" y="717"/><use href="#node" x="1245" y="717"/><use href="#node" x="1319" y="717"/><use href="#node" x="1364" y="702"/><use href="#node" x="1410" y="717"/><use href="#node" x="1471" y="717"/><use href="#node" x="1560" y="717"/><use href="#node" x="1590" y="717"/><use href="#node" x="1590" y="748"/><use href="#node" x="1680" y="717"/><use href="#node" x="1770" y="717"/><use href="#node" x="1680" y="867"/>
            </g>
          </svg>
          <div class="vs"><button class="sb" aria-label="Scroll up"><svg width="12" height="6"><use href="#i-up"/></svg></button><div class="track"><div class="thumb docv"></div></div><button class="sb" aria-label="Scroll down"><svg width="12" height="6"><use href="#i-down"/></svg></button></div>
          <div class="hs"><button class="sb" aria-label="Scroll left"><svg width="6" height="12"><use href="#i-left"/></svg></button><div class="track"><div class="thumb doch"></div></div><button class="sb" aria-label="Scroll right"><svg width="6" height="12"><use href="#i-right"/></svg></button></div>
          <div class="corner"></div>
        </div>
      </section>
      <div class="bottom">
        <section class="panel">
          <header class="phead"><h2>Console</h2><button class="plain" aria-label="Menu"><svg width="12" height="6"><use href="#i-down"/></svg></button><button class="plain" aria-label="Pin"><svg width="12" height="16"><use href="#i-pin"/></svg></button></header>
          <div class="well log">
            <ul>
              <li><time>08/17/26 11:40:15</time><i></i>pv_ibr.kcf saved.</li>
              <li><time>08/17/26 11:40:15</time><i></i>Starting Multi-Case. Spawning 3 simulations (24 CPU threads available).</li>
              <li><time>08/17/26 11:40:26</time><i></i>The simulation completed successfully. (10.759 elapsed seconds)</li>
              <li><time>08/17/26 11:40:57</time><i></i>pv_ibr.kcf saved.</li>
              <li><time>08/17/26 11:40:57</time><i></i>Starting Multi-Case. Spawning 3 simulations (24 CPU threads available).</li>
              <li><time>08/17/26 11:41:08</time><i></i>The simulation completed successfully. (10.858 elapsed seconds)</li>
              <li><time>08/17/26 11:45:07</time><i></i>pv_ibr.kcf saved.</li>
            </ul>
            <div class="vs"><button class="sb" aria-label="Scroll up"><svg width="12" height="6"><use href="#i-up"/></svg></button><div class="track logt"><div class="thumb"></div></div><button class="sb" aria-label="Scroll down"><svg width="12" height="6"><use href="#i-down"/></svg></button></div>
          </div>
        </section>
        <section class="panel">
          <header class="phead"><h2>Simulation Monitor</h2><button class="plain" aria-label="Menu"><svg width="12" height="6"><use href="#i-down"/></svg></button><button class="plain" aria-label="Pin"><svg width="12" height="16"><use href="#i-pin"/></svg></button></header>
          <div class="well mon">
            <ul>
              <li><div><i></i>pv_ibr.1:<span>100%</span></div>Finshed @ 2026-08-17 11:41:08, 10.858 sec elapsed</li>
              <li><div><i></i>pv_ibr.2:<span>100%</span></div>Finshed @ 2026-08-17 11:41:07, 10.762 sec elapsed</li>
              <li><div><i></i>pv_ibr.3:<span>100%</span></div>Finshed @ 2026-08-17 11:41:07, 10.599 sec elapsed</li>
            </ul>
            <div class="hs"><button class="sb" aria-label="Scroll left"><svg width="6" height="12"><use href="#i-left"/></svg></button><div class="track"><div class="thumb full"></div></div><button class="sb" aria-label="Scroll right"><svg width="6" height="12"><use href="#i-right"/></svg></button></div>
          </div>
        </section>
      </div>
    </div>

    <section class="panel picker">
      <header class="phead"><h2>Component Picker</h2><button class="plain" aria-label="Menu"><svg width="12" height="6"><use href="#i-down"/></svg></button><button class="plain" aria-label="Pin"><svg width="12" height="16"><use href="#i-pin"/></svg></button></header>
      <div class="well parts">
        <div class="plist">
          <h3><button class="plain" aria-label="Collapse"><svg width="28" height="28"><use href="#i-expand"/></svg></button>Circuitry <em><b>17</b> objects</em></h3>
          <ul>
            <li><svg width="36" height="30"><use href="#c-res"/></svg>Resistor</li>
            <li><svg width="36" height="30"><use href="#c-ind"/></svg>Inductor</li>
            <li><svg width="36" height="30"><use href="#c-cap"/></svg>Capacitor</li>
            <li><svg width="36" height="36"><use href="#c-rlc"/></svg>RLC</li>
            <li><svg width="36" height="30"><use href="#c-res"/></svg>Coupled RL</li>
            <li><svg width="36" height="30"><use href="#c-var"/></svg>Varistor</li>
            <li><svg width="36" height="36"><use href="#c-sine"/></svg>Voltage Source</li>
            <li><svg width="36" height="36"><use href="#c-sine"/></svg>Grid Source</li>
            <li><svg width="36" height="36"><use href="#c-cur"/></svg>Current Source</li>
            <li><svg width="36" height="36"><use href="#c-sine"/></svg>Programmable Source</li>
            <li><svg width="36" height="36"><use href="#c-gnd"/></svg>Ground</li>
            <li><svg width="36" height="36"><use href="#c-xf"/></svg>Ideal Transformer</li>
            <li><svg width="36" height="36"><use href="#c-xf"/></svg>Transformer</li>
            <li><svg width="36" height="36"><use href="#c-sw"/><text class="sym" x="11" y="15">t</text></svg>Time Switch</li>
            <li><svg width="36" height="36"><use href="#c-sw"/><text class="sym" x="11" y="14">c</text></svg>Controlled Switch</li>
            <li><svg width="36" height="36"><use href="#c-diode"/></svg>Diode</li>
            <li><svg width="36" height="36"><use href="#c-line"/></svg>Transmission Line</li>
          </ul>
          <h3><button class="plain" aria-label="Collapse"><svg width="28" height="28"><use href="#i-expand"/></svg></button>Math <em><b>18</b> objects</em></h3>
          <ul>
            <li><svg width="36" height="36"><use href="#c-sum"/></svg>Arithmetic</li>
            <li><svg width="36" height="36"><use href="#c-box"/><text class="sym big-sym" x="18" y="23">|x|</text></svg>ABS</li>
            <li><svg width="36" height="36"><use href="#c-box"/><text class="sym big-sym" x="18" y="24">K</text></svg>GAIN</li>
          </ul>
        </div>
        <div class="vs"><button class="sb" aria-label="Scroll up"><svg width="12" height="6"><use href="#i-up"/></svg></button><div class="track"><div class="thumb pv"></div></div><button class="sb" aria-label="Scroll down"><svg width="12" height="6"><use href="#i-down"/></svg></button></div>
      </div>
    </section>
  </main>

  <footer class="status">
    <span class="msg">pv_ibr.kcf saved.</span>
    <button class="sq" aria-label="Zoom out"><svg width="16" height="16"><path d="M0 8h16" stroke="#000" stroke-width="3"/></svg></button>
    <input type="range" aria-label="Zoom" min="0" max="100" value="13">
    <button class="sq" aria-label="Zoom in"><svg width="16" height="16"><path d="M0 8h16M8 0v16" stroke="#000" stroke-width="3"/></svg></button>
    <span class="zoom">100 %</span>
  </footer>
</div>
</body>
</html>
```
FILE: styles.css
```css
* { box-sizing: border-box; }
html, body { height: 100%; margin: 0; }
body { background: #eef0f2; color: #000; font: 17px/24px "Open Sans", "Noto Sans", sans-serif; }
h1, h2, h3, p, ul { margin: 0; padding: 0; font-weight: 400; }
ul { list-style: none; }
button, input, select { font: inherit; color: inherit; margin: 0; }
button { padding: 0; background: none; border: 0; }
svg { display: block; flex: none; }
.defs { position: absolute; width: 0; height: 0; }
.plain { display: flex; align-items: center; justify-content: center; }

.window { min-height: 100vh; display: flex; flex-direction: column; background: #fff; border: 2px solid #637588; border-radius: 12px; overflow: hidden; }

/* title bar */
.titlebar { height: 34px; display: flex; align-items: center; }
.quick { width: 50px; display: flex; align-items: center; gap: 6px; padding-left: 7px; }
.title { flex: 1; text-align: center; }
.winbtns { display: flex; }
.winbtns button { width: 69px; height: 34px; padding-left: 2px; }

/* ribbon tabs */
.tabs { height: 37px; display: flex; align-items: flex-end; border-bottom: 1px solid #d4d6da; }
.tab-file { width: 90px; height: 34px; margin-bottom: 2px; background: #667789; color: #fff; }
.tab-main { width: 64px; height: 39px; margin-bottom: -1px; background: #fff; border: 2px solid #dcdee2; border-bottom: 0; color: #333; }
.tabs-chevron { margin: 0 6px 13px auto; }

/* ribbon */
.ribbon { height: 143px; display: flex; padding: 6px 0; border-bottom: 2px solid #dfdfdf; }
.group { display: flex; flex-direction: column; border-right: 2px solid #dfdfdf; }
.tools { flex: 1; display: flex; }
.caption { height: 22px; line-height: 22px; text-align: center; color: #888; }
.g-file { width: 220px; }
.g-file .tools { padding-left: 7px; }
.g-clip { width: 186px; }
.g-clip .tools { padding-left: 12px; }
.g-diag { width: 123px; }
.g-diag .tools { padding-left: 5px; }
.g-sim { width: 610px; }
.g-sim .tools { padding-left: 7px; }
.g-plot { width: 253px; }
.g-plot .tools { padding-left: 5px; }
.g-help { width: 276px; }
.g-help .tools { padding-left: 5px; }
.g-proj { width: 93px; }
.big { width: 52px; display: flex; flex-direction: column; align-items: center; gap: 5px; padding-top: 5px; }
.big svg { height: 40px; overflow: visible; }
.g-diag .big { width: 56px; }
.g-plot .big, .g-help .big { width: 58px; }
.g-help .big + .big { width: 68px; }
.g-proj .big { width: 93px; padding-left: 4px; }
.stack { display: flex; flex-direction: column; gap: 7px; }
.g-clip .stack { width: 88px; }
.small { height: 26px; display: flex; align-items: center; gap: 11px; white-space: nowrap; }
.g-help .stack { padding-left: 5px; }
.g-help .small { gap: 8px; }
.off { color: #929292; }
.radios { width: 122px; padding: 3px 0 0 5px; display: flex; flex-direction: column; gap: 6px; }
.radios label { height: 32px; display: flex; align-items: center; gap: 7px; white-space: nowrap; }
input[type="radio"] { appearance: none; width: 18px; height: 18px; flex: none; border: 2px solid #222; border-radius: 50%; background: #fff; }
input[type="radio"]:checked { background: radial-gradient(circle, #44505e 0 4px, #fff 5px); }
.fields { display: grid; grid-template: 34px 34px 32px / 90px 141px; row-gap: 3px; align-items: center; margin-left: 10px; }
.fields label { white-space: nowrap; }
.spin { height: 32px; display: flex; border: 2px solid #ccc; background: #fff; }
.spin input { flex: 1; min-width: 0; border: 0; padding: 0 0 0 7px; background: none; }
.spin .rn { padding-left: 3px; }
.arrows { width: 26px; display: flex; flex-direction: column; justify-content: center; gap: 8px; }
.checks { display: flex; flex-direction: column; gap: 8px; margin-left: 7px; }
.checks label { height: 22px; display: flex; align-items: center; gap: 7px; white-space: nowrap; }
.checks input { appearance: none; width: 20px; height: 20px; flex: none; border: 2px solid #000; display: grid; place-content: center; }
.checks input:checked::before { content: ""; width: 5px; height: 9px; border: solid #637588; border-width: 0 2px 2px 0; rotate: 40deg; translate: 0 -1px; }
.checks .del { height: 24px; gap: 8px; }
.g-plot .checks { margin-left: 0; }

/* work area */
.work { flex: 1; display: grid; grid-template-columns: 509px 1fr 374px; column-gap: 10px; padding-bottom: 3px; }
.left, .center { display: flex; flex-direction: column; min-width: 0; }
.panel { border: 2px solid #abadb3; background: #fff; display: flex; flex-direction: column; min-width: 0; }
.phead { height: 37px; flex: none; display: flex; align-items: center; gap: 16px; padding: 0 10px 5px 3px; }
.phead h2 { flex: 1; font-size: 17px; }
.well { flex: 1; border: 2px solid #abadb3; display: flex; min-height: 0; }

.runner { flex: 1; }
.rcard { flex: 1; margin: 3px 7px 11px 11px; padding: 16px 8px 0; border: 2px solid #d2d3d4; border-radius: 4px; }
.rcard h1 { font-size: 28px; line-height: 40px; text-align: center; }
.rcard p { margin: 14px 0; }
.rcard a { color: #0a66cc; }
.note { border: 2px solid; border-radius: 6px; padding: 12px 16px 12px 12px; margin-bottom: 8px; }
.warn { background: #ffe1cc; border-color: #e07000; color: #804a12; }
.info { background: #fdf1cb; border-color: #dfa800; color: #7c6414; }
.case { display: flex; flex-direction: column; border: 2px solid #d2d3d4; border-radius: 6px; background: #efefef; padding: 4px 4px 8px; margin-bottom: 16px; }
.case header { height: 30px; display: flex; align-items: center; gap: 8px; margin-bottom: 9px; }
.case h3 { flex: 1; font-size: 17px; font-weight: 700; margin-left: 1px; }
.case header label { width: 94px; display: flex; align-items: center; gap: 7px; }
.case header input { appearance: none; width: 22px; height: 21px; border: 2px solid #707070; background: #fff; }
.sq { width: 30px; height: 30px; flex: none; display: flex; align-items: center; justify-content: center; border: 2px solid #707070; background: #ddd; }
.add { display: block; width: 145px; height: 31px; margin: 8px 0 0 6px; border: 2px solid #707070; background: #ddd; white-space: nowrap; line-height: 26px; }
.addgroup { width: 154px; margin: 23px 0 0; }
.cmd { margin: 0 5px 8px 6px; padding: 12px 8px; border: 2px solid #7a7a7a; border-radius: 5px; background: #fff; }
.r1, .r2 { display: flex; align-items: center; }
.r1 { height: 32px; gap: 9px; }
.r2 { height: 28px; gap: 10px; margin: 10px 0 0 4px; }
.cmd input { width: 105px; height: 28px; padding: 0 3px; border: 2px solid #abadb3; background: #fff; }
.cmd .r2 input { width: 150px; }
.sel { display: flex; align-items: center; width: 75px; height: 32px; margin-left: -5px; padding-right: 9px; border: 2px solid #acacac; background: linear-gradient(#f0f0f0, #e3e3e3); }
.sel select { appearance: none; flex: 1; min-width: 0; border: 0; background: none; padding: 0 0 0 7px; }
.btabs { height: 31px; display: flex; padding-left: 3px; align-items: flex-start; }
.bt { height: 32px; padding: 0 8px; border: 2px solid #c4c4c4; border-top: 0; background: linear-gradient(#f2f2f2, #e8e8e8); }
.bt.on { height: 34px; margin-top: -2px; background: #fff; padding: 2px 8px 0; outline: 2px dotted #111; outline-offset: -4px; }

/* document */
.doc { flex: 1; display: flex; flex-direction: column; min-height: 0; border: 2px solid #abadb3; border-top: 0; }
.doctabs { height: 34px; flex: none; display: flex; align-items: center; justify-content: space-between; border-bottom: 2px solid #abadb3; padding-right: 4px; }
.doctab { height: 34px; margin: 0 0 -2px -1px; padding: 0 9px 3px 4px; display: flex; align-items: center; gap: 7px; background: #fff; border: solid #abadb3; border-width: 2px 2px 0 0; }
.docbody { flex: 1; display: grid; grid-template: 1fr 27px / 1fr 26px; padding: 2px 2px 2px 3px; }
.canvas { width: 100%; height: 100%; background: #f1f1f1; overflow: hidden; }
.canvas text { font-family: "DejaVu Sans Mono", "Liberation Mono", monospace; font-size: 14px; white-space: pre; }
.canvas .t19 { font-size: 19px; }
.canvas .t13, .canvas .t13 text { font-size: 13px; }
.canvas .t11, .canvas .pin { font-size: 11px; }
.canvas .pin, .canvas .blue { fill: #11d; }
.canvas .end { text-anchor: end; }
.canvas .mid, .canvas .mid text { text-anchor: middle; }
.canvas .seg { font-family: "Open Sans", sans-serif; font-size: 17px; }
.canvas .scr { font-family: "Open Sans", sans-serif; font-size: 12px; }
.thin { fill: #fff; stroke: #000; stroke-width: 1.5px; }
.bflag { color: #11f; }
.corner { background: #f0f0f0; }

/* scroll bars */
.vs { display: flex; flex-direction: column; width: 23px; margin: 3px 2px; }
.hs { display: flex; height: 23px; margin: 2px; }
.track { flex: 1; display: flex; }
.vs .track { flex-direction: column; }
.sb { width: 23px; height: 23px; flex: none; display: flex; align-items: center; justify-content: center; border: 1px solid #8d887c; background: #fff; }
.hs .sb { width: 25px; }
.thumb { border: 1px solid #8d887c; background: #fff; }
.docv { height: 150px; margin-top: 243px; }
.doch { width: 220px; margin-left: 453px; }
.full { flex: 1; margin-right: 6px; }

/* bottom panels */
.bottom { height: 297px; margin-top: 9px; display: grid; grid-template-columns: 1fr 450px; column-gap: 9px; }
.bottom .well { margin: 1px 10px 11px 10px; }
.log ul { flex: 1; padding: 3px 9px; }
.log li { display: flex; align-items: center; height: 30px; white-space: nowrap; }
.log i, .mon i { width: 15px; height: 15px; border-radius: 50%; background: #008000; }
.log i { margin: 0 8px 0 7px; }
.log .vs { margin: 2px 1px; }
.log .sb { height: 26px; }
.logt { justify-content: flex-end; }
.logt .thumb { height: 27px; }
.mon { flex-direction: column; justify-content: space-between; }
.mon ul { padding: 5px 9px; }
.mon li { height: 54px; white-space: nowrap; }
.mon li div { display: flex; align-items: center; gap: 8px; }
.mon span { margin-left: 4px; }
.mon .hs { margin: 2px 2px 1px; }

/* component picker */
.picker { margin-right: 1px; }
.parts { margin: 1px 6px 9px; }
.plist { flex: 1; min-width: 0; padding-left: 5px; }
.plist h3 { height: 40px; display: flex; align-items: center; gap: 7px; font-size: 25px; }
.plist ul + h3 { height: 41px; }
.plist em { font-size: 19px; color: #bbb; padding-top: 4px; }
.plist li { height: 54px; display: flex; align-items: center; gap: 12px; padding-left: 18px; font-size: 19px; white-space: nowrap; }
.sym { font-size: 14px; text-anchor: middle; }
.big-sym { font-size: 17px; }
.parts .vs { margin: 2px; }
.parts .sb { height: 26px; }
.pv { height: 537px; }

/* status bar */
.status { height: 45px; flex: none; display: flex; align-items: center; background: #f0eded; border-top: 2px solid #c4c2c2; padding: 0 32px 0 5px; }
.msg { flex: 1; }
.status input { appearance: none; width: 165px; height: 26px; margin: 0 22px; background: linear-gradient(#cfcfcf, #cfcfcf) center / 100% 7px no-repeat; }
.status input::-webkit-slider-thumb { appearance: none; width: 16px; height: 26px; border: 2px solid #acacac; background: #f0f0f0; }
.zoom { margin-left: 14px; white-space: nowrap; }
```
